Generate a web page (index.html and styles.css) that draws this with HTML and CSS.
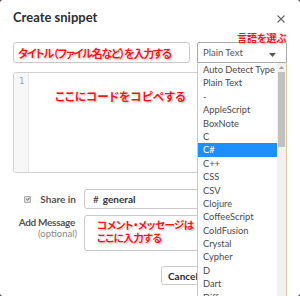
FILE: index.html
```html
<!DOCTYPE html>
<html lang="ja">
<head>
<meta charset="utf-8">
<title>Create snippet</title>
<link rel="stylesheet" href="styles.css">
</head>
<body>
<div class="modal">
  <header class="head">
    <h1 class="title">Create snippet</h1>
    <button class="close" aria-label="close">
      <svg width="8" height="8" viewBox="0 0 8 8"><path d="M0.5 0.5L7.5 7.5M7.5 0.5L0.5 7.5" stroke="#666" stroke-width="1.1" fill="none"/></svg>
    </button>
  </header>

  <div class="row-top">
    <div class="field title-field"><span class="note note-title">タイトル（ファイル名など）を入力する</span></div>
    <div class="select-wrap">
      <span class="note note-lang">言語を選ぶ</span>
      <div class="select">
        <span>Plain Text</span>
        <svg class="caret" width="7" height="4" viewBox="0 0 7 4"><path d="M0 0H7L3.5 4Z" fill="#555"/></svg>
      </div>
      <div class="listbox">
        <ul class="options">
          <li>Auto Detect Type</li>
          <li>Plain Text</li>
          <li>-</li>
          <li>AppleScript</li>
          <li>BoxNote</li>
          <li>C</li>
          <li class="sel">C#</li>
          <li>C++</li>
          <li>CSS</li>
          <li>CSV</li>
          <li>Clojure</li>
          <li>CoffeeScript</li>
          <li>ColdFusion</li>
          <li>Crystal</li>
          <li>Cypher</li>
          <li>D</li>
          <li>Dart</li>
          <li>Diff</li>
        </ul>
        <div class="scrollbar">
          <svg class="up" width="5" height="3" viewBox="0 0 5 3"><path d="M0 3H5L2.5 0Z" fill="#a3a3a3"/></svg>
          <div class="thumb"></div>
        </div>
      </div>
    </div>
  </div>

  <div class="code">
    <div class="gutter">1</div>
    <div class="code-body"><span class="note note-code">ここにコードをコピペする</span></div>
  </div>

  <div class="form-grid">
    <div class="lbl lbl-share"><span class="check"><svg width="4" height="4" viewBox="0 0 4 4"><path d="M0.3 2L1.6 3.2L3.7 0.6" stroke="#555" stroke-width="1" fill="none"/></svg></span>Share in</div>
    <div class="field share"><span class="hash">#</span>general</div>
    <div class="lbl lbl-msg">Add Message<small>(optional)</small></div>
    <div class="field msg">
      <span class="note note-msg">コメント・メッセージは</span>
      <span class="note note-msg">ここに入力する</span>
    </div>
  </div>

  <footer class="foot">
    <button class="btn">Cancel</button>
  </footer>
</div>
</body>
</html>
```

FILE: styles.css
```css
html {
  background: #3d3d3d;
}
body {
  margin: 0;
  width: 300px;
  height: 296px;
  background: #fff;
  border-radius: 3px;
  overflow: hidden;
  font-family: Lato, "Noto Sans CJK JP", sans-serif;
  color: #2c2d30;
}
.modal {
  padding: 9px 13px 0;
}
.head {
  display: flex;
  align-items: flex-start;
  justify-content: space-between;
}
.title {
  margin: 0;
  font-size: 13px;
  line-height: 16px;
  font-weight: 700;
  color: #2c2d30;
}
.close {
  border: 0;
  background: none;
  padding: 0;
  margin: 6px 2px 0 0;
  width: 8px;
  height: 8px;
  display: block;
}
.close svg { display: block; }

.note {
  font-family: "Noto Sans CJK JP", sans-serif;
  font-weight: 700;
  color: #f01616;
  font-feature-settings: "palt";
  text-shadow: 0 0 1px #fff, 0 0 2px #fff, 1px 1px 2px rgba(0,0,0,0.35);
  white-space: nowrap;
}

.row-top {
  display: flex;
  gap: 7px;
  margin-top: 17px;
  position: relative;
  z-index: 2;
}
.field {
  border: 1px solid #c9c9c9;
  border-radius: 3px;
  background: #fff;
  box-sizing: border-box;
}
.title-field {
  width: 177px;
  height: 21px;
  display: flex;
  align-items: center;
  padding-left: 4px;
}
.note-title {
  font-size: 11px;
  line-height: 12px;
  letter-spacing: -1.2px;
}
.select-wrap {
  position: relative;
  width: 90px;
}
.note-lang {
  position: absolute;
  left: 40px;
  top: -10px;
  font-size: 10px;
  line-height: 12px;
}
.select {
  height: 21px;
  box-sizing: border-box;
  border: 1px solid #a9a9a9;
  border-radius: 2px 2px 0 0;
  display: flex;
  align-items: center;
  justify-content: space-between;
  padding: 0 10px 0 5px;
  font-size: 9.5px;
  color: #555;
}
.caret {
  margin-top: 5px;
}
.listbox {
  position: absolute;
  left: 0;
  top: 21px;
  width: 90px;
  height: 240px;
  box-sizing: border-box;
  border: 1px solid #dcc69c;
  border-top: 0;
  background: #fff;
  display: flex;
}
.options {
  list-style: none;
  margin: 0;
  padding: 0;
  flex: 1;
  min-width: 0;
  font-size: 9.3px;
  color: #4a4a4a;
}
.options li {
  height: 13.4px;
  line-height: 13.4px;
  padding-left: 5px;
  white-space: nowrap;
  overflow: hidden;
}
.options li.sel {
  background: #1e8fff;
  color: #fff;
}
.scrollbar {
  width: 9px;
  flex: none;
  background: #f1f1f1;
  display: flex;
  flex-direction: column;
  align-items: center;
}
.up {
  margin-top: 3px;
}
.thumb {
  width: 7px;
  height: 75px;
  margin-top: 3px;
  background: #c1c1c1;
}

.code {
  margin-top: 9px;
  height: 101px;
  border: 1px solid #d0d0d0;
  border-radius: 3px;
  box-sizing: border-box;
  display: flex;
  overflow: hidden;
}
.gutter {
  width: 15px;
  background: #f7f7f7;
  border-right: 1px solid #e8e8e8;
  font-family: "DejaVu Sans Mono", monospace;
  font-size: 8px;
  color: #999;
  text-align: right;
  padding: 4px 4px 0 0;
  box-sizing: border-box;
}
.code-body {
  flex: 1;
  padding: 12px 0 0 26px;
}
.note-code {
  font-size: 11.5px;
  line-height: 13px;
  letter-spacing: 0.2px;
}

.form-grid {
  display: grid;
  grid-template-columns: 71px 1fr;
  row-gap: 6px;
  margin-top: 16px;
}
.lbl {
  font-size: 10px;
  font-weight: 700;
  color: #555;
  text-align: right;
  padding-right: 8px;
}
.lbl-share {
  display: flex;
  align-items: center;
  justify-content: flex-end;
}
.check {
  width: 5px;
  height: 5px;
  border: 1px solid #aaa;
  background: #e2e2e2;
  border-radius: 1px;
  margin-right: 9px;
  display: flex;
  align-items: center;
  justify-content: center;
}
.check svg { display: block; }
.lbl-msg {
  padding-top: 1px;
  line-height: 12px;
  letter-spacing: -0.3px;
  padding-right: 9px;
}
.lbl-msg small {
  display: block;
  font-size: 9.5px;
  font-weight: 400;
  color: #888;
  letter-spacing: 0;
  margin-right: -2px;
}
.share {
  height: 20px;
  display: flex;
  align-items: center;
  padding-left: 8px;
  font-size: 10px;
  font-weight: 700;
  color: #333;
}
.hash {
  font-weight: 400;
  margin-right: 4px;
}
.msg {
  height: 36px;
  padding: 3px 0 0 12px;
  display: flex;
  flex-direction: column;
}
.note-msg {
  display: block;
  font-size: 10.5px;
  line-height: 12.5px;
  letter-spacing: -0.5px;
}

.foot {
  display: flex;
  margin-top: 15px;
  padding-left: 148px;
}
.btn {
  height: 19px;
  width: 52px;
  box-sizing: border-box;
  border: 1px solid #ccc;
  border-radius: 3px;
  background: #fff;
  font-family: Lato, sans-serif;
  font-size: 10px;
  font-weight: 700;
  color: #2c2d30;
  text-align: left;
  padding: 0 0 0 6px;
}
```
